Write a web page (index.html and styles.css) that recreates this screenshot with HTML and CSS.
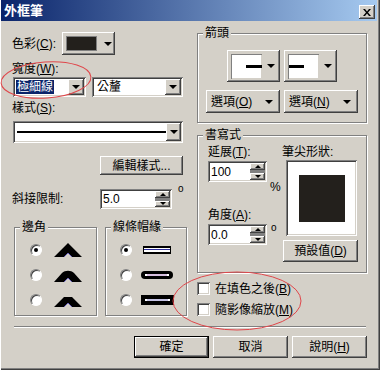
FILE: index.html
```html
<!DOCTYPE html>
<html lang="zh-Hant">
<head>
  <meta charset="UTF-8" />
  <title>外框筆</title>
  <link rel="stylesheet" href="styles.css">
</head>
<body>
  <div class="window">
    <div class="titlebar">
      <span class="title">外框筆</span>
      <span class="btn close">
        <svg width="8" height="7" viewBox="0 0 8 7"><path d="M0 0h2l2 2.4L6 0h2L5 3.5 8 7H6L4 4.6 2 7H0l3-3.5z" fill="#000"/></svg>
      </span>
    </div>

    <div class="body">
      <div class="col-left">
        <div class="row row-color">
          <span class="lbl lbl-color">色彩(<u>C</u>):</span>
          <span class="btn color-btn"><span class="swatch"></span><i class="arrow"></i></span>
        </div>

        <div class="lbl lbl-width">寬度(<u>W</u>):</div>
        <div class="row row-width">
          <div class="combo combo-w"><span class="combo-text"><span class="sel">極細線</span></span><span class="btn combo-btn"><i class="arrow"></i></span></div>
          <div class="combo combo-unit"><span class="combo-text">公釐</span><span class="btn combo-btn"><i class="arrow"></i></span></div>
        </div>

        <div class="lbl lbl-style">樣式(<u>S</u>):</div>
        <div class="combo combo-style"><span class="combo-text"><i class="style-line"></i></span><span class="btn combo-btn"><i class="arrow"></i></span></div>

        <span class="btn edit-btn">編輯樣式...</span>

        <div class="row row-miter">
          <span class="lbl lbl-miter">斜接限制:</span>
          <div class="spin spin-miter"><span class="spin-text">5.0</span><span class="spin-btns"><span class="btn spin-up"><i class="sarrow up"></i></span><span class="spin-mid"></span><span class="btn spin-dn"><i class="sarrow"></i></span></span></div>
          <span class="deg">o</span>
        </div>

        <div class="row groups">
          <fieldset class="grp grp-corner">
            <legend>邊角</legend>
            <div class="opt"><span class="radio on"></span>
              <svg class="ico" width="30" height="14" viewBox="0 0 30 14"><polygon points="1,14 15,0 29,14 19,14 15,10 11,14" fill="#000"/><polyline points="11,14 15,10 19,14" fill="none" stroke="#6a63b8" stroke-width="1"/></svg>
            </div>
            <div class="opt"><span class="radio"></span>
              <svg class="ico" width="30" height="14" viewBox="0 0 30 14"><path d="M1 14 L9 5 C12 2 18 2 21 5 L29 14 L19 14 L15 10 L11 14 Z" fill="#000"/><polyline points="11,14 15,10 19,14" fill="none" stroke="#6a63b8" stroke-width="1"/></svg>
            </div>
            <div class="opt"><span class="radio"></span>
              <svg class="ico" width="30" height="14" viewBox="0 0 30 14"><polygon points="1,14 11,4 19,4 29,14 19,14 15,10 11,14" fill="#000"/><polyline points="11,14 15,10 19,14" fill="none" stroke="#6a63b8" stroke-width="1"/></svg>
            </div>
          </fieldset>

          <fieldset class="grp grp-cap">
            <legend>線條帽緣</legend>
            <div class="opt"><span class="radio on"></span>
              <svg class="ico" width="34" height="10" viewBox="0 0 34 10"><rect x="2" y="1" width="28" height="8" fill="#000"/><rect x="3" y="3" width="26" height="4" fill="#fff"/><rect x="3" y="4" width="26" height="1" fill="#2a2a9a"/></svg>
            </div>
            <div class="opt"><span class="radio"></span>
              <svg class="ico" width="34" height="10" viewBox="0 0 34 10"><rect x="0" y="1" width="32" height="8" rx="4" fill="#000"/><rect x="4" y="4" width="24" height="2" fill="#fff"/><rect x="6" y="4.5" width="20" height="1" fill="#b080c0"/></svg>
            </div>
            <div class="opt"><span class="radio"></span>
              <svg class="ico" width="34" height="10" viewBox="0 0 34 10"><rect x="0" y="0" width="33" height="10" fill="#000"/><rect x="4" y="4" width="25" height="2" fill="#fff"/><rect x="6" y="4.5" width="21" height="1" fill="#8a86c8"/></svg>
            </div>
          </fieldset>
        </div>
      </div>

      <div class="col-right">
        <fieldset class="grp grp-arrows">
          <legend>箭頭</legend>
          <div class="arrow-row">
            <span class="btn arrow-btn"><span class="arrow-swatch"><i class="aline aline-r"></i></span><i class="arrow"></i></span>
            <span class="btn arrow-btn"><span class="arrow-swatch"><i class="aline aline-l"></i></span><i class="arrow"></i></span>
          </div>
          <div class="opt-row">
            <span class="btn opt-btn"><span>選項(<u>O</u>)</span><i class="arrow"></i></span>
            <span class="btn opt-btn"><span>選項(<u>N</u>)</span><i class="arrow"></i></span>
          </div>
        </fieldset>

        <fieldset class="grp grp-cal">
          <legend>書寫式</legend>
          <div class="cal">
            <div class="cal-left">
              <div class="lbl">延展(<u>T</u>):</div>
              <div class="row spin-row">
                <div class="spin spin-cal"><span class="spin-text">100</span><span class="spin-btns"><span class="btn spin-up"><i class="sarrow up"></i></span><span class="spin-mid"></span><span class="btn spin-dn"><i class="sarrow"></i></span></span></div>
                <span class="unit">%</span>
              </div>
              <div class="lbl lbl-angle">角度(<u>A</u>):</div>
              <div class="row spin-row">
                <div class="spin spin-cal"><span class="spin-text">0.0</span><span class="spin-btns"><span class="btn spin-up"><i class="sarrow up"></i></span><span class="spin-mid"></span><span class="btn spin-dn"><i class="sarrow"></i></span></span></div>
                <span class="deg">o</span>
              </div>
            </div>
            <div class="cal-right">
              <div class="lbl">筆尖形狀:</div>
              <div class="nib"><span class="nib-sq"></span></div>
              <span class="btn def-btn">預設值(<u>D</u>)</span>
            </div>
          </div>
        </fieldset>

        <div class="chk-row"><span class="chk"></span>在填色之後(<u>B</u>)</div>
        <div class="chk-row"><span class="chk"></span>隨影像縮放(<u>M</u>)</div>
      </div>
    </div>

    <div class="sep"></div>

    <div class="buttons">
      <span class="btn dlg-btn default">確定</span>
      <span class="btn dlg-btn">取消</span>
      <span class="btn dlg-btn">說明(<u>H</u>)</span>
    </div>

    <svg class="marks" width="380" height="370" viewBox="0 0 380 370">
      <ellipse cx="46" cy="80" rx="45" ry="18" transform="rotate(-4 46 80)" fill="none" stroke="#e0464a" stroke-width="1"/>
      <ellipse cx="237" cy="301" rx="64" ry="29" fill="none" stroke="#e0464a" stroke-width="1"/>
    </svg>
  </div>
</body>
</html>
```

FILE: styles.css
```css
* {
  box-sizing: border-box;
}
body {
  margin: 0;
  background: #d4d0c8;
  font-family: "Liberation Sans", "Noto Sans CJK TC", sans-serif;
  font-size: 12px;
  line-height: 14px;
  color: #000;
}
u {
  text-decoration: underline;
}
.window {
  position: relative;
  width: 380px;
  height: 370px;
  background: #d4d0c8;
  box-shadow: inset 1px 0 #fff, inset -1px -1px #404040, inset -2px -2px #808080;
  overflow: hidden;
}
.titlebar {
  height: 21px;
  margin: 0 3px 0 1px;
  padding: 0 2px 2px 3px;
  display: flex;
  align-items: flex-end;
  justify-content: space-between;
  background: linear-gradient(to right, #0a246a, #a6caf0);
}
.title {
  align-self: center;
  color: #fff;
  font-weight: bold;
  font-size: 13px;
  font-family: "Noto Sans CJK TC", sans-serif;
}

/* raised and sunken 3d edges */
.btn {
  background: #d4d0c8;
  box-shadow: inset -1px -1px #404040, inset 1px 1px #fff, inset -2px -2px #808080;
}
.close {
  width: 16px;
  height: 14px;
  display: flex;
  align-items: center;
  justify-content: center;
}
.arrow {
  display: block;
  width: 0;
  height: 0;
  border-left: 4px solid transparent;
  border-right: 4px solid transparent;
  border-top: 4px solid #000;
}
.sarrow {
  display: block;
  width: 0;
  height: 0;
  border-left: 3px solid transparent;
  border-right: 3px solid transparent;
  border-top: 3px solid #000;
}
.sarrow.up {
  border-top: 0;
  border-bottom: 3px solid #000;
}

.body {
  display: flex;
  height: 305px;
  padding: 5px 0 0 12px;
}
.col-left {
  width: 176px;
  padding-top: 6px;
}
.col-right {
  width: 170px;
  margin-left: 9px;
}
.row {
  display: flex;
  align-items: center;
}
.lbl {
  height: 14px;
  white-space: nowrap;
}

.row-color {
  height: 23px;
}
.lbl-color {
  width: 50px;
}
.color-btn {
  width: 53px;
  height: 23px;
  display: flex;
  align-items: center;
  padding-left: 4px;
}
.swatch {
  width: 31px;
  height: 15px;
  background: #23201c;
  border: 1px solid #808080;
  margin-right: 7px;
}
.lbl-width {
  margin-top: 7px;
}
.row-width {
  margin-top: 1px;
}

.combo {
  display: flex;
  align-items: center;
  background: #fff;
  box-shadow: inset 1px 1px #808080, inset -1px -1px #fff, inset 2px 2px #404040, inset -2px -2px #d4d0c8;
  padding: 2px;
}
.combo-text {
  flex: 1;
  padding-left: 1px;
  display: flex;
  align-items: center;
}
.combo-btn {
  width: 16px;
  height: 16px;
  display: flex;
  align-items: center;
  justify-content: center;
}
.combo-w {
  width: 73px;
  height: 20px;
  margin-left: 1px;
}
.combo-unit {
  width: 91px;
  height: 20px;
  margin-left: 6px;
}
.combo-unit .combo-text {
  padding-left: 3px;
}
.sel {
  background: #0a246a;
  color: #fff;
  padding: 0 1px;
}
.lbl-style {
  margin-top: 4px;
}
.combo-style {
  width: 170px;
  height: 22px;
  margin-top: 6px;
  margin-left: 1px;
}
.combo-style .combo-btn {
  height: 18px;
}
.style-line {
  display: block;
  width: 149px;
  height: 2px;
  margin-left: 1px;
  background: #000;
}

.edit-btn {
  display: flex;
  align-items: center;
  justify-content: center;
  width: 83px;
  height: 19px;
  margin: 13px 0 0 88px;
}

.row-miter {
  margin-top: 14px;
  align-items: flex-start;
}
.lbl-miter {
  width: 88px;
  margin-top: 3px;
}
.spin {
  display: flex;
  align-items: center;
  background: #fff;
  box-shadow: inset 1px 1px #808080, inset -1px -1px #fff, inset 2px 2px #404040, inset -2px -2px #d4d0c8;
  padding: 2px;
}
.spin-miter {
  width: 72px;
  height: 20px;
}
.spin-text {
  flex: 1;
  padding-left: 1px;
}
.spin-btns {
  display: flex;
  flex-direction: column;
  width: 15px;
  align-self: stretch;
}
.spin-up,
.spin-dn {
  flex: 1;
  display: flex;
  align-items: center;
  justify-content: center;
}
.spin-mid {
  height: 3px;
  background: #808080;
}
.deg {
  font-size: 10px;
  line-height: 10px;
  margin: -5px 0 0 6px;
}

.groups {
  margin-top: 11px;
  align-items: flex-start;
}
.grp {
  margin: 0;
  padding: 0;
  min-width: 0;
  border: 1px solid #808080;
  box-shadow: inset 1px 1px #fff, 1px 1px #fff;
}
.grp legend {
  margin-left: 5px;
  padding: 0 2px;
  background: #d4d0c8;
  line-height: 14px;
}
.grp-corner {
  width: 83px;
  height: 96px;
  margin-left: 2px;
  padding: 3px 0 0 15px;
}
.grp-corner legend {
  margin-left: -10px;
}
.grp-cap {
  width: 82px;
  height: 96px;
  margin-left: 8px;
  padding: 3px 0 0 14px;
}
.grp-cap legend {
  margin-left: -9px;
}
.opt {
  display: flex;
  align-items: center;
  height: 25px;
}
.grp-corner .ico {
  margin-left: 11px;
}
.grp-cap .ico {
  margin-left: 9px;
}
.radio {
  width: 12px;
  height: 12px;
  border-radius: 50%;
  background: #fff;
  border: 1px solid;
  border-color: #808080 #fff #fff #808080;
  box-shadow: inset 1px 1px #404040;
  position: relative;
}
.radio.on::after {
  content: "";
  position: absolute;
  left: 3px;
  top: 3px;
  width: 4px;
  height: 4px;
  border-radius: 50%;
  background: #000;
}

.grp-arrows {
  width: 170px;
  height: 97px;
  padding-top: 10px;
}
.arrow-row,
.opt-row {
  display: flex;
  justify-content: center;
  gap: 4px;
}
.arrow-btn {
  width: 53px;
  height: 32px;
  display: flex;
  align-items: center;
  padding-left: 4px;
}
.arrow-swatch {
  width: 31px;
  height: 25px;
  background: #fff;
  box-shadow: inset 1px 1px #808080, inset -1px -1px #d4d0c8;
  display: flex;
  align-items: center;
  margin-right: 5px;
}
.aline {
  display: block;
  height: 3px;
  background: #000;
}
.aline-r {
  width: 16px;
  margin-left: 15px;
}
.aline-l {
  width: 15px;
  margin-left: 1px;
}
.opt-row {
  margin-top: 8px;
}
.opt-btn {
  width: 74px;
  height: 23px;
  display: flex;
  align-items: center;
  justify-content: space-between;
  padding: 0 7px 0 5px;
}

.grp-cal {
  width: 170px;
  height: 145px;
  margin-top: 5px;
  padding: 3px 0 0 10px;
}
.grp-cal legend {
  margin-left: -5px;
}
.cal {
  display: flex;
}
.cal-left {
  width: 74px;
}
.spin-row {
  margin-top: 2px;
  align-items: flex-start;
}
.spin-cal {
  width: 59px;
  height: 21px;
}
.unit {
  margin: 19px 0 0 3px;
}
.spin-row .deg {
  margin: -1px 0 0 4px;
}
.lbl-angle {
  margin-top: 14px;
}
.nib {
  width: 71px;
  height: 76px;
  margin: 1px 0 0 4px;
  background: #fff;
  box-shadow: inset 1px 1px #808080, inset -1px -1px #fff, inset 2px 2px #404040, inset -2px -2px #d4d0c8;
  display: flex;
  align-items: center;
  justify-content: center;
}
.nib-sq {
  width: 46px;
  height: 47px;
  background: #23201c;
}
.def-btn {
  display: flex;
  align-items: center;
  justify-content: center;
  width: 75px;
  height: 22px;
  margin: 4px 0 0 1px;
}

.chk-row {
  display: flex;
  align-items: center;
  height: 21px;
}
.chk-row:first-of-type {
  margin-top: 5px;
}
.chk {
  width: 13px;
  height: 13px;
  margin-right: 5px;
  background: #fff;
  box-shadow: inset 1px 1px #808080, inset -1px -1px #fff, inset 2px 2px #404040, inset -2px -2px #d4d0c8;
}

.sep {
  height: 2px;
  margin: 0 14px;
  border-top: 1px solid #808080;
  border-bottom: 1px solid #fff;
}
.buttons {
  display: flex;
  justify-content: flex-end;
  gap: 4px;
  margin-top: 8px;
  padding-right: 13px;
}
.dlg-btn {
  width: 75px;
  height: 22px;
  display: flex;
  align-items: center;
  justify-content: center;
}
.dlg-btn.default {
  box-shadow: inset 0 0 0 1px #000, inset -2px -2px #404040, inset 2px 2px #fff, inset -3px -3px #808080;
}
.marks {
  position: absolute;
  left: 0;
  top: 0;
  pointer-events: none;
}
```
